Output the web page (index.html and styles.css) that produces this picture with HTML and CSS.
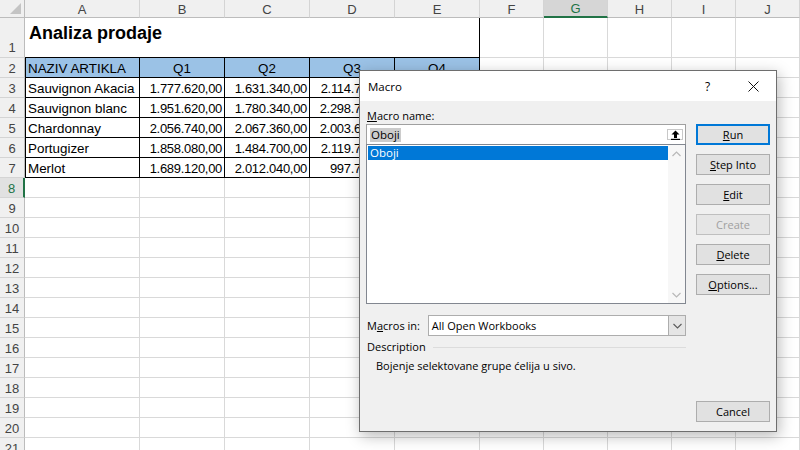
FILE: index.html
```html
<!DOCTYPE html>
<html>
<head>
<meta charset="utf-8">
<link rel="stylesheet" href="styles.css">
</head>
<body>
<div class="sheet">
  <div class="ch corner"><span class="tri"></span></div>
  <div class="ch">A</div><div class="ch">B</div><div class="ch">C</div><div class="ch">D</div><div class="ch">E</div><div class="ch">F</div><div class="ch sel">G</div><div class="ch">H</div><div class="ch">I</div><div class="ch">J</div>

  <div class="rh r1">1</div><div class="c title">Analiza prodaje</div><div class="c"></div><div class="c"></div><div class="c"></div><div class="c"></div><div class="c"></div>

  <div class="rh">2</div><div class="c t hd first">NAZIV ARTIKLA</div><div class="c t hd ctr">Q1</div><div class="c t hd ctr">Q2</div><div class="c t hd ctr">Q3</div><div class="c t hd ctr">Q4</div><div class="c"></div><div class="c"></div><div class="c"></div><div class="c"></div><div class="c"></div>

  <div class="rh">3</div><div class="c t first">Sauvignon Akacia</div><div class="c t num">1.777.620,00</div><div class="c t num">1.631.340,00</div><div class="c t num">2.114.720,00</div><div class="c t num">1.980.400,00</div><div class="c"></div><div class="c"></div><div class="c"></div><div class="c"></div><div class="c"></div>

  <div class="rh">4</div><div class="c t first">Sauvignon blanc</div><div class="c t num">1.951.620,00</div><div class="c t num">1.780.340,00</div><div class="c t num">2.298.720,00</div><div class="c t num">2.100.300,00</div><div class="c"></div><div class="c"></div><div class="c"></div><div class="c"></div><div class="c"></div>

  <div class="rh">5</div><div class="c t first">Chardonnay</div><div class="c t num">2.056.740,00</div><div class="c t num">2.067.360,00</div><div class="c t num">2.003.640,00</div><div class="c t num">1.870.200,00</div><div class="c"></div><div class="c"></div><div class="c"></div><div class="c"></div><div class="c"></div>

  <div class="rh">6</div><div class="c t first">Portugizer</div><div class="c t num">1.858.080,00</div><div class="c t num">1.484.700,00</div><div class="c t num">2.119.720,00</div><div class="c t num">1.760.500,00</div><div class="c"></div><div class="c"></div><div class="c"></div><div class="c"></div><div class="c"></div>

  <div class="rh">7</div><div class="c t first">Merlot</div><div class="c t num">1.689.120,00</div><div class="c t num">2.012.040,00</div><div class="c t num">997.720,00</div><div class="c t num">1.540.300,00</div><div class="c"></div><div class="c"></div><div class="c"></div><div class="c"></div><div class="c"></div>

  <div class="rh sel">8</div><div class="c"></div><div class="c"></div><div class="c"></div><div class="c"></div><div class="c"></div><div class="c"></div><div class="c"></div><div class="c"></div><div class="c"></div><div class="c"></div>
  <div class="rh">9</div><div class="c"></div><div class="c"></div><div class="c"></div><div class="c"></div><div class="c"></div><div class="c"></div><div class="c"></div><div class="c"></div><div class="c"></div><div class="c"></div>
  <div class="rh">10</div><div class="c"></div><div class="c"></div><div class="c"></div><div class="c"></div><div class="c"></div><div class="c"></div><div class="c"></div><div class="c"></div><div class="c"></div><div class="c"></div>
  <div class="rh">11</div><div class="c"></div><div class="c"></div><div class="c"></div><div class="c"></div><div class="c"></div><div class="c"></div><div class="c"></div><div class="c"></div><div class="c"></div><div class="c"></div>
  <div class="rh">12</div><div class="c"></div><div class="c"></div><div class="c"></div><div class="c"></div><div class="c"></div><div class="c"></div><div class="c"></div><div class="c"></div><div class="c"></div><div class="c"></div>
  <div class="rh">13</div><div class="c"></div><div class="c"></div><div class="c"></div><div class="c"></div><div class="c"></div><div class="c"></div><div class="c"></div><div class="c"></div><div class="c"></div><div class="c"></div>
  <div class="rh">14</div><div class="c"></div><div class="c"></div><div class="c"></div><div class="c"></div><div class="c"></div><div class="c"></div><div class="c"></div><div class="c"></div><div class="c"></div><div class="c"></div>
  <div class="rh">15</div><div class="c"></div><div class="c"></div><div class="c"></div><div class="c"></div><div class="c"></div><div class="c"></div><div class="c"></div><div class="c"></div><div class="c"></div><div class="c"></div>
  <div class="rh">16</div><div class="c"></div><div class="c"></div><div class="c"></div><div class="c"></div><div class="c"></div><div class="c"></div><div class="c"></div><div class="c"></div><div class="c"></div><div class="c"></div>
  <div class="rh">17</div><div class="c"></div><div class="c"></div><div class="c"></div><div class="c"></div><div class="c"></div><div class="c"></div><div class="c"></div><div class="c"></div><div class="c"></div><div class="c"></div>
  <div class="rh">18</div><div class="c"></div><div class="c"></div><div class="c"></div><div class="c"></div><div class="c"></div><div class="c"></div><div class="c"></div><div class="c"></div><div class="c"></div><div class="c"></div>
  <div class="rh">19</div><div class="c"></div><div class="c"></div><div class="c"></div><div class="c"></div><div class="c"></div><div class="c"></div><div class="c"></div><div class="c"></div><div class="c"></div><div class="c"></div>
  <div class="rh">20</div><div class="c"></div><div class="c"></div><div class="c"></div><div class="c"></div><div class="c"></div><div class="c"></div><div class="c"></div><div class="c"></div><div class="c"></div><div class="c"></div>
  <div class="rh">21</div><div class="c"></div><div class="c"></div><div class="c"></div><div class="c"></div><div class="c"></div><div class="c"></div><div class="c"></div><div class="c"></div><div class="c"></div><div class="c"></div>
</div>

<div class="dialog">
  <div class="titlebar">
    <span class="dtitle">Macro</span>
    <span class="tbtn help">?</span>
    <span class="tbtn close"><svg width="11" height="11" viewBox="0 0 11 11"><path d="M0.5 0.5 L10.5 10.5 M10.5 0.5 L0.5 10.5" stroke="#111" stroke-width="1" fill="none"/></svg></span>
  </div>
  <div class="dbody">
    <div class="left">
      <div class="lbl"><u>M</u>acro name:</div>
      <div class="edit">
        <span class="hl">Oboji</span>
        <span class="upbtn"><svg width="11" height="10" viewBox="0 0 11 10"><path d="M5.5 0.5 L1.5 4.5 H4 V8 H7 V4.5 H9.5 Z" fill="#000"/><rect x="1" y="8.8" width="9" height="1.2" fill="#000"/></svg></span>
      </div>
      <div class="list">
        <div class="items"><div class="item">Oboji</div></div>
        <div class="vscroll">
          <span class="sarr"><svg width="9" height="6" viewBox="0 0 9 6"><path d="M0.5 5 L4.5 1 L8.5 5" stroke="#b8b8b8" stroke-width="1.2" fill="none"/></svg></span>
          <span class="sarr"><svg width="9" height="6" viewBox="0 0 9 6"><path d="M0.5 1 L4.5 5 L8.5 1" stroke="#b8b8b8" stroke-width="1.2" fill="none"/></svg></span>
        </div>
      </div>
      <div class="inrow">
        <span class="inlbl">M<u>a</u>cros in:</span>
        <div class="combo">
          <span class="cval">All Open Workbooks</span>
          <span class="carr"><svg width="9" height="6" viewBox="0 0 9 6"><path d="M0.5 1 L4.5 5 L8.5 1" stroke="#5a5a5a" stroke-width="1.1" fill="none"/></svg></span>
        </div>
      </div>
      <div class="descrow"><span>Description</span><span class="rule"></span></div>
      <div class="desc">Bojenje selektovane grupe ćelija u sivo.</div>
    </div>
    <div class="right">
      <div class="btn def"><u>R</u>un</div>
      <div class="btn"><u>S</u>tep Into</div>
      <div class="btn"><u>E</u>dit</div>
      <div class="btn dis">Create</div>
      <div class="btn"><u>D</u>elete</div>
      <div class="btn"><u>O</u>ptions...</div>
      <div class="btn cancel">Cancel</div>
    </div>
  </div>
</div>
</body>
</html>
```
FILE: styles.css
```css
html, body {
  margin: 0;
  padding: 0;
  width: 800px;
  height: 450px;
  overflow: hidden;
  background: #ffffff;
}
body {
  position: relative;
  font-family: "Liberation Sans", Arial, sans-serif;
}

.sheet {
  display: grid;
  grid-template-columns: 25px 115px 85px 85px 85px 85px 64px 64px 64px 64px 64px;
  grid-template-rows: 18px 40px repeat(20, 20px);
  font-size: 13.4px;
  color: #000;
}
.sheet > div {
  box-sizing: border-box;
  border-right: 1px solid #d9d9d9;
  border-bottom: 1px solid #d9d9d9;
  white-space: nowrap;
  overflow: hidden;
}

.ch {
  background: #f0f0f0;
  color: #444;
  text-align: center;
  line-height: 19px;
  font-size: 13px;
  border-bottom-color: #bcbcbc !important;
  border-right-color: #d4d4d4 !important;
}
.ch.sel {
  background: #d6d6d6;
  color: #217346;
  border-bottom: 2px solid #217346 !important;
  line-height: 18px;
}
.corner {
  position: relative;
  border-right-color: #bcbcbc !important;
}
.tri {
  position: absolute;
  right: 3px;
  bottom: 3px;
  width: 0;
  height: 0;
  border-left: 11px solid transparent;
  border-bottom: 11px solid #c4c4c4;
}

.rh {
  background: #f0f0f0;
  color: #444;
  text-align: center;
  line-height: 21px;
  font-size: 13px;
  border-right-color: #bcbcbc !important;
  border-bottom-color: #d4d4d4 !important;
}
.rh.r1 {
  padding-top: 21px;
  line-height: 18px;
}
.rh.sel {
  background: #e1e1e1;
  color: #217346;
  border-right: 2px solid #217346 !important;
}

.c {
  line-height: 21px;
  padding: 0 3px;
}
.title {
  grid-column: span 5;
  font-weight: bold;
  font-size: 18px;
  line-height: 31px;
  padding-left: 4px;
  border-bottom-color: #000 !important;
  border-right-color: #000 !important;
}
.t {
  border-right-color: #000 !important;
  border-bottom-color: #000 !important;
}
.t.first {
  box-shadow: inset 1px 0 0 #000;
}
.hd {
  background: #9bc2e6;
}
.ctr {
  text-align: center;
}
.num {
  text-align: right;
  font-size: 13px;
  letter-spacing: -0.3px;
  padding-right: 2px;
}

/* dialog */
.dialog {
  position: absolute;
  left: 359px;
  top: 70px;
  width: 418px;
  height: 362px;
  box-sizing: border-box;
  border: 1px solid #6e6e6e;
  background: #f0f0f0;
  box-shadow: 2px 4px 14px rgba(0, 0, 0, 0.28);
  font-family: "Segoe UI", "Open Sans", sans-serif;
  font-size: 11px;
  color: #000;
  display: flex;
  flex-direction: column;
}
.titlebar {
  height: 30px;
  background: #ffffff;
  display: flex;
  align-items: center;
  flex: none;
}
.dtitle {
  flex: 1;
  padding-left: 8px;
  font-size: 11.5px;
}
.tbtn {
  width: 46px;
  height: 30px;
  display: flex;
  align-items: center;
  justify-content: center;
}
.help {
  font-size: 12px;
  padding-left: 1px;
  box-sizing: border-box;
}
.dbody {
  flex: 1;
  display: flex;
  padding: 7px 6px 9px 6px;
}
.left {
  width: 320px;
  display: flex;
  flex-direction: column;
}
.lbl {
  line-height: 15px;
  height: 15px;
  margin-bottom: 1px;
  padding-left: 1px;
}
.edit {
  height: 20px;
  box-sizing: border-box;
  border: 1px solid #a0a0a0;
  border-bottom: none;
  background: #fff;
  display: flex;
  align-items: center;
  padding-left: 3px;
}
.hl {
  background: #cccccc;
  padding: 0 1px;
  line-height: 14px;
  font-size: 11.5px;
}
.upbtn {
  margin-left: auto;
  margin-right: 2px;
  width: 16px;
  height: 11px;
  box-sizing: border-box;
  border: 1px solid #c8c8c8;
  background: #fff;
  display: flex;
  align-items: center;
  justify-content: center;
}
.list {
  height: 160px;
  box-sizing: border-box;
  border: 1px solid #828790;
  background: #fff;
  display: flex;
}
.items {
  flex: 1;
  padding: 1px 0 0 1px;
}
.item {
  background: #0078d7;
  color: #fff;
  height: 14px;
  line-height: 14px;
  padding-left: 2px;
  font-size: 11.5px;
}
.vscroll {
  width: 17px;
  background: #f7f7f7;
  display: flex;
  flex-direction: column;
  justify-content: space-between;
}
.sarr {
  height: 17px;
  display: flex;
  align-items: center;
  justify-content: center;
}
.inrow {
  margin-top: 11px;
  display: flex;
  align-items: center;
  height: 21px;
}
.inlbl {
  width: 61px;
  padding-left: 1px;
}
.combo {
  width: 259px;
  height: 21px;
  box-sizing: border-box;
  border: 1px solid #adadad;
  background: #fff;
  display: flex;
  align-items: center;
}
.cval {
  flex: 1;
  padding-left: 3px;
}
.carr {
  width: 17px;
  height: 19px;
  box-sizing: border-box;
  border-left: 1px solid #adadad;
  background: #e5e5e5;
  display: flex;
  align-items: center;
  justify-content: center;
}
.descrow {
  margin-top: 3px;
  display: flex;
  align-items: center;
  line-height: 16px;
  padding-left: 1px;
}
.rule {
  flex: 1;
  margin-left: 7px;
  border-top: 1px solid #dcdcdc;
}
.desc {
  margin-top: 3px;
  line-height: 16px;
  padding-left: 10px;
}
.right {
  width: 74px;
  margin-left: 10px;
  padding-top: 16px;
  display: flex;
  flex-direction: column;
}
.btn {
  height: 21px;
  box-sizing: border-box;
  border: 1px solid #adadad;
  background: #e1e1e1;
  display: flex;
  align-items: center;
  justify-content: center;
  margin-bottom: 9px;
}
.btn.def {
  border: 2px solid #0078d7;
}
.btn.dis {
  color: #a0a0a0;
  border-color: #bfbfbf;
  background: #e6e6e6;
}
.btn.cancel {
  margin-top: auto;
  margin-bottom: 0;
}
```
